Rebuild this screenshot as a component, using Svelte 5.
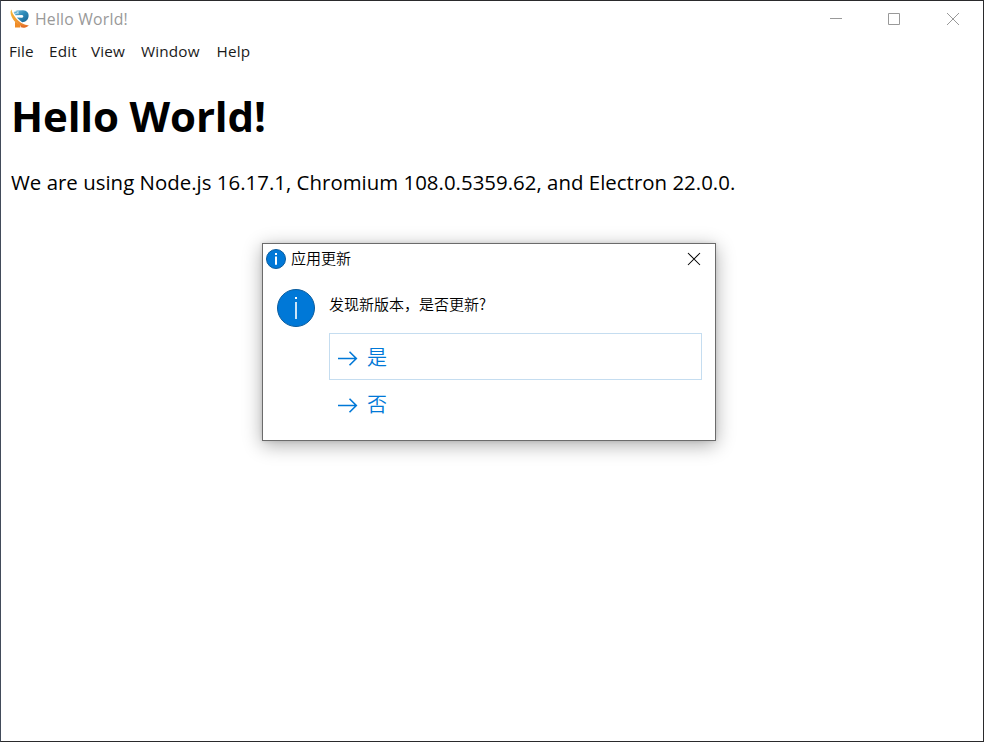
<script>
  const menus = [
    { label: 'File', width: 40 },
    { label: 'Edit', width: 42 },
    { label: 'View', width: 50 },
    { label: 'Window', width: 75.5 },
    { label: 'Help', width: 40 }
  ];
  const choices = ['是', '否'];
  let selected = $state(0);
</script>

<div class="window">
  <header class="titlebar">
    <svg class="logo" width="20" height="20" viewBox="0 0 20 20">
      <defs>
        <linearGradient id="blue" x1="0" y1="0" x2="1" y2="1">
          <stop offset="0" stop-color="#7fc0dc" />
          <stop offset="0.45" stop-color="#2f8dbb" />
          <stop offset="1" stop-color="#17608f" />
        </linearGradient>
        <linearGradient id="orange" x1="0" y1="0" x2="1" y2="1">
          <stop offset="0" stop-color="#f7bd3c" />
          <stop offset="1" stop-color="#e8752b" />
        </linearGradient>
      </defs>
      <path d="M3.6 3.2 L6.5 1.4 L13 1.2 C17 1.4 19 4 18.6 7.3 C18.2 11 15.6 13 12.2 13.2 L10 11.6 L6.8 8.4 L12 8.8 C13.8 8.5 13.8 6.2 12 6.1 L5.5 6.3 Z" fill="url(#blue)" />
      <path d="M4 3 L7 1.6 M5 5 L8 3.5 M8 2 V5" stroke="#d7edf5" stroke-width="0.8" />
      <path d="M5 12.8 L10 15.4 L10.4 18.6 L5 18.6 Z" fill="#ef8b25" />
      <path d="M1.6 0.5 C-0.2 2 0.4 6.6 3.2 10.6 C7 15.8 13 19.2 18.8 16.2 C14 16 9.4 13.4 6 9.2 C3.2 6 1.7 3 1.6 0.5 Z" fill="url(#orange)" />
      <path d="M10 15.2 C13 17.2 16 17 18.8 16.2 C16.5 18.8 13 19.2 11 18.3 Z" fill="#e46f28" />
    </svg>
    <span class="title">Hello World!</span>
    <svg class="controls" width="130" height="14" viewBox="0 0 130 14" fill="none" stroke="#999">
      <path d="M0 6.5 H12" />
      <path d="M58.5 1.5 H69.5 V12.5 H58.5 Z" />
      <path d="M117 1 L129 13 M129 1 L117 13" />
    </svg>
  </header>

  <nav>
    {#each menus as menu}
      <span style:width="{menu.width}px">{menu.label}</span>
    {/each}
  </nav>

  <main>
    <h1>Hello World!</h1>
    <p>We are using Node.js 16.17.1, Chromium 108.0.5359.62, and Electron 22.0.0.</p>
  </main>

  <div class="dialog" role="dialog" aria-label="应用更新">
    <div class="dialog-title">
      <svg width="20" height="20" viewBox="0 0 20 20">
        <circle cx="10" cy="10" r="9.5" fill="#0078d7" stroke="#0a5c9e" />
        <path d="M9 4 h2 v2 h-2 Z M9 7.4 h2 v8.4 h-2 Z" fill="#fff" />
      </svg>
      <span>应用更新</span>
      <svg class="close" width="14" height="14" viewBox="0 0 14 14" stroke="#000" stroke-width="1.05">
        <path d="M1 1 L13 13 M13 1 L1 13" />
      </svg>
    </div>
    <div class="dialog-body">
      <svg class="info" width="38" height="38" viewBox="0 0 38 38">
        <circle cx="19" cy="19" r="18.5" fill="#0078d7" stroke="#0a5c9e" />
        <path d="M18 8 h2 v2 h-2 Z M18.2 13 h1.6 v17 h-1.6 Z" fill="#fff" />
      </svg>
      <div class="content">
        <div class="message">发现新版本，是否更新?</div>
        {#each choices as choice, i}
          <button class:selected={selected === i} onclick={() => (selected = i)}>
            <svg width="20" height="15" viewBox="0 0 20 15" fill="none" stroke="#0078d7" stroke-width="1.6">
              <path d="M0 7.5 H18.5 M11.5 0.8 L18.3 7.5 L11.5 14.2" />
            </svg>
            <span>{choice}</span>
          </button>
        {/each}
      </div>
    </div>
  </div>
</div>

<style>
  :global(body) {
    margin: 0;
    background: #fff;
  }
  .window {
    position: relative;
    box-sizing: border-box;
    width: 984px;
    height: 742px;
    overflow: hidden;
    background: #fff;
    border: 1px solid #2a2a2c;
    border-left-color: #424b5a;
    font-family: 'Open Sans', 'Noto Sans', 'Noto Sans CJK SC', sans-serif;
    color: #000;
  }
  .titlebar {
    display: flex;
    align-items: center;
    height: 36px;
    padding-left: 9px;
  }
  .title {
    margin-left: 5px;
    font-size: 15.8px;
    line-height: 20px;
    letter-spacing: 0.2px;
    color: #999;
    white-space: nowrap;
  }
  .controls {
    margin-left: auto;
    margin-right: 23px;
  }
  nav {
    display: flex;
    height: 30px;
    padding-left: 8px;
    font-size: 15.3px;
    line-height: 29px;
    letter-spacing: 0.15px;
    color: #1a1a1a;
  }
  main {
    padding-left: 10px;
  }
  h1 {
    margin: 21px 0 0;
    font-size: 42px;
    line-height: 56px;
    font-weight: 700;
    letter-spacing: -0.15px;
    white-space: nowrap;
  }
  p {
    margin: 24px 0 0;
    font-size: 20.4px;
    line-height: 28px;
    letter-spacing: 0.025px;
    white-space: nowrap;
  }
  .dialog {
    position: absolute;
    left: 261px;
    top: 242px;
    box-sizing: border-box;
    width: 454px;
    height: 198px;
    background: #fff;
    border: 1px solid #6b6b6b;
    box-shadow: 0 4px 18px rgba(0, 0, 0, 0.33), 0 0 4px rgba(0, 0, 0, 0.12);
    font-family: 'Noto Sans CJK SC', sans-serif;
    font-weight: 350;
  }
  .dialog-title {
    display: flex;
    align-items: center;
    height: 30px;
    padding: 0 14px 0 3px;
    font-size: 15px;
  }
  .dialog-title span {
    margin-left: 5px;
    padding-bottom: 2px;
    line-height: 20px;
  }
  .close {
    margin-left: auto;
  }
  .dialog-body {
    display: flex;
    padding: 15px 13px 0 14px;
  }
  .info {
    flex: none;
  }
  .content {
    flex: 1;
    margin-left: 14px;
  }
  .message {
    height: 44px;
    font-size: 15px;
    line-height: 30px;
  }
  button {
    display: flex;
    align-items: center;
    box-sizing: border-box;
    width: 373px;
    height: 47px;
    padding: 0 0 0 8px;
    border: 1px solid transparent;
    background: none;
    font: 350 20px/28px 'Noto Sans CJK SC', sans-serif;
    color: #0078d7;
    text-align: left;
  }
  button svg {
    margin-top: 4px;
  }
  button.selected {
    border-color: #c5ddf0;
  }
  button span {
    margin-left: 9px;
  }
</style>
